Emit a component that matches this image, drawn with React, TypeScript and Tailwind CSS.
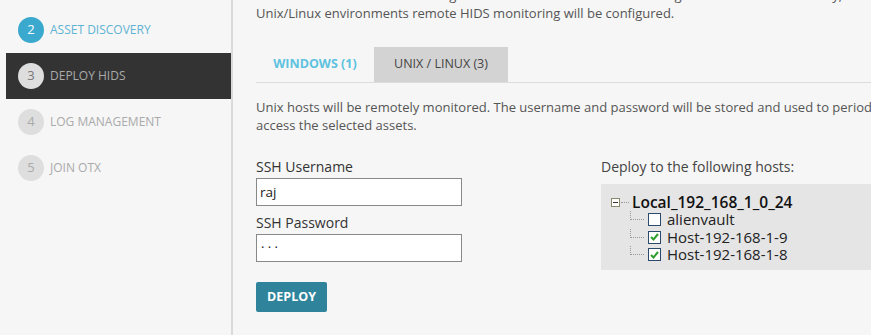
import React from "react";

const font = { fontFamily: '"Open Sans", "Noto Sans", sans-serif' };

function Step({ n, label, state }: { n: number; label: string; state: "done" | "active" | "todo" }) {
  const row = state === "active" ? "bg-[#333333]" : "";
  const circle =
    state === "done"
      ? "bg-[#3aa9cd] text-white"
      : state === "active"
      ? "bg-[#dedede] text-[#777]"
      : "bg-[#dedede] text-[#aaa]";
  const text = state === "done" ? "text-[#5fb3d3]" : "text-[#aaaaaa]";
  return (
    <div className={`flex h-[46px] items-center pl-[12px] ${row}`}>
      <div className={`flex h-[26px] w-[26px] items-center justify-center rounded-full text-[13px] ${circle}`}>{n}</div>
      <div className={`ml-[6px] text-[12px] uppercase ${text}`}>{label}</div>
    </div>
  );
}

function Check({ checked }: { checked: boolean }) {
  return (
    <div className="flex h-[13px] w-[13px] shrink-0 items-center justify-center border border-[#2c4a6e] bg-white">
      {checked ? (
        <svg width="9" height="8" viewBox="0 0 9 8">
          <path d="M1 4 L3.5 6.5 L8 1" fill="none" stroke="#2e9e2e" strokeWidth="2" />
        </svg>
      ) : null}
    </div>
  );
}

function TreeRow({ label, checked }: { label: string; checked: boolean }) {
  return (
    <div className="flex h-[17.5px] items-center">
      <div className="relative h-full w-[22px] shrink-0">
        <div className="absolute left-[4px] top-0 h-[9px] w-[14px] border-b border-l border-dotted border-[#999]" />
      </div>
      <Check checked={checked} />
      <span className="ml-[6px] text-[15px] leading-[17px] text-[#222]">{label}</span>
    </div>
  );
}

export default function App() {
  return (
    <div className="flex h-[335px] w-[871px] overflow-hidden bg-[#f6f6f6]" style={font}>
      <div className="w-[233px] shrink-0 border-r-2 border-[#dadada] pl-[6px] pt-[7px]">
        <Step n={2} label="Asset Discovery" state="done" />
        <Step n={3} label="Deploy HIDS" state="active" />
        <Step n={4} label="Log Management" state="todo" />
        <Step n={5} label="Join OTX" state="todo" />
      </div>
      <div className="min-w-0 flex-1 pl-[23px]">
        <p className="-mt-[14px] whitespace-nowrap text-[13px] leading-[18px] text-[#555]">
          detection and to collect event logs. For windows machines the HIDS agent will be installed locally; for
          <br />
          Unix/Linux environments remote HIDS monitoring will be configured.
        </p>
        <div className="mt-[25px] flex h-[36px] border-b border-[#dcdcdc]">
          <div className="flex w-[118px] items-center justify-center text-[12.5px] font-bold text-[#5ec2e0]">
            WINDOWS (1)
          </div>
          <div className="flex w-[134px] items-center justify-center bg-[#d3d3d3] text-[12.5px] text-[#444]">
            UNIX / LINUX (3)
          </div>
        </div>
        <p className="mt-[15px] whitespace-nowrap text-[13px] leading-[18px] text-[#555]">
          Unix hosts will be remotely monitored. The username and password will be stored and used to periodically
          <br />
          access the selected assets.
        </p>
        <div className="mt-[23px] flex">
          <div className="w-[345px] shrink-0">
            <div className="text-[14px] leading-[20px] text-[#333]">SSH Username</div>
            <div className="mt-[1px] flex h-[28px] w-[206px] items-center border border-[#888] bg-white px-[3px] text-[13.5px] text-[#222]">
              raj
            </div>
            <div className="mt-[7px] text-[14px] leading-[20px] text-[#333]">SSH Password</div>
            <div className="mt-[1px] flex h-[28px] w-[206px] items-center border border-[#888] bg-white px-[4px] text-[13px] text-[#222]">
              · · ·
            </div>
            <button className="mt-[20px] flex h-[30px] w-[71px] items-center justify-center rounded-[2px] bg-[#2f849b] text-[12.5px] font-bold text-white">
              DEPLOY
            </button>
          </div>
          <div className="min-w-0 flex-1">
            <div className="text-[14px] leading-[20px] text-[#444]">Deploy to the following hosts:</div>
            <div className="mt-[7px] h-[86px] bg-[#e5e5e5] pl-[10px] pt-[10px]">
              <div className="flex h-[17px] items-center">
                <div className="flex h-[9px] w-[9px] shrink-0 items-center justify-center border border-[#8a8a6a] bg-white">
                  <div className="h-[1px] w-[5px] bg-[#333]" />
                </div>
                <div className="ml-[1px] w-[8px] border-b border-dotted border-[#999]" />
                <span className="ml-[3px] whitespace-nowrap text-[15.5px] font-semibold leading-[17px] text-[#111]">Local_192_168_1_0_24</span>
              </div>
              <div className="pl-[15px]">
                <TreeRow label="alienvault" checked={false} />
                <TreeRow label="Host-192-168-1-9" checked={true} />
                <TreeRow label="Host-192-168-1-8" checked={true} />
              </div>
            </div>
          </div>
        </div>
      </div>
    </div>
  );
}
